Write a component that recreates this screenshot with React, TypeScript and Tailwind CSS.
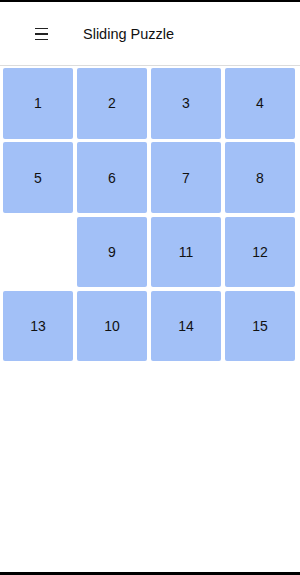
import React from 'react';

const TILES: (number | null)[] = [1, 2, 3, 4, 5, 6, 7, 8, null, 9, 11, 12, 13, 10, 14, 15];

export default function App() {
  return (
    <div className="w-[300px] h-[575px] flex flex-col bg-white border-t-2 border-b-[3px] border-black overflow-hidden" style={{ fontFamily: '"Liberation Sans", Arial, sans-serif' }}>
      <header className="h-[64px] shrink-0 flex items-center border-b border-[#dcdcdc]">
        <div className="ml-[35px] mt-[1px] w-[13px] flex flex-col gap-[4px]">
          <span className="block h-[1.5px] bg-[#222]" />
          <span className="block h-[1.5px] bg-[#222]" />
          <span className="block h-[1.5px] bg-[#222]" />
        </div>
        <h1 className="ml-[35px] mt-[2px] text-[14.5px] text-[#111]">Sliding Puzzle</h1>
      </header>

      <main className="px-[3px] pt-[2px]">
        <div className="grid grid-cols-4 gap-x-[4px] gap-y-[3.8px] w-[292px]">
          {TILES.map((n, i) =>
            n === null ? (
              <div key={i} className="h-[70.5px]" />
            ) : (
              <div key={i} className="h-[70.5px] rounded-[2px] bg-[#a2c0f7] flex items-center justify-center pt-[1px] text-[14px] text-[#111]">
                {n}
              </div>
            )
          )}
        </div>
      </main>
    </div>
  );
}
